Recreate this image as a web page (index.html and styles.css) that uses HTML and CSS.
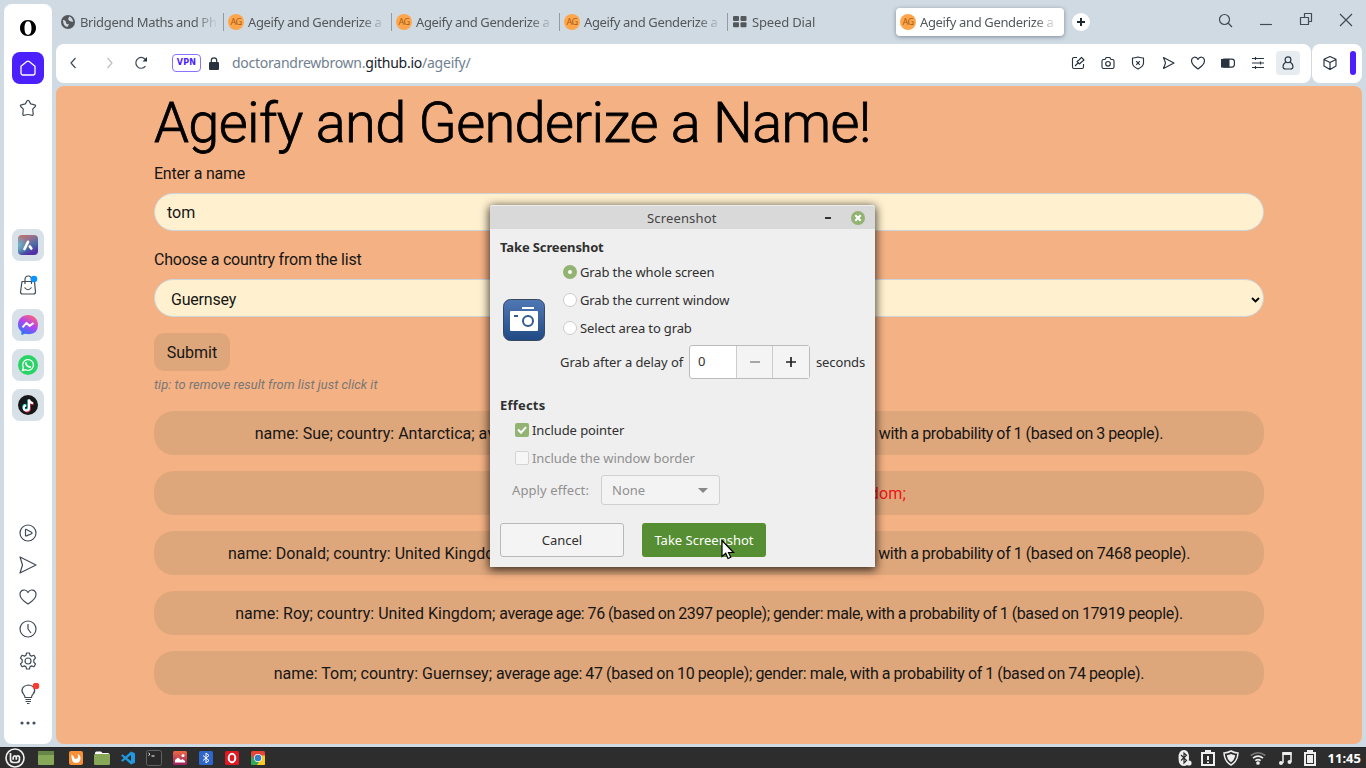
FILE: index.html
```html
<!DOCTYPE html>
<html lang="en">
<head>
<meta charset="utf-8">
<title>Ageify and Genderize a Name!</title>
<link rel="stylesheet" href="styles.css">
</head>
<body>
<div class="desktop">
  <div class="browser">
    <aside class="sidebar">
      <div class="side-top">
        <svg class="opera" width="16" height="18" viewBox="0 0 16 18"><path fill="#000" fill-rule="evenodd" d="M8 1C3.300 1 0 4.500 0 9s3.300 8 8 8 8-3.500 8-8-3.300-8-8-8zm0 1.200c2.300 0 3.500 2.800 3.500 6.800s-1.200 6.800-3.500 6.800S4.500 13 4.500 9 5.700 2.200 8 2.200z"/></svg>
        <div class="home"><svg class="line" width="18" height="18" viewBox="0 0 18 18"><path d="M2 7.300 7.800 2.600q1.200-.9 2.400 0L16 7.300V14q0 2-2 2H4q-2 0-2-2z"/></svg></div>
        <svg class="line star" width="18" height="18" viewBox="0 0 18 18"><path d="M8 1.900q1-1.300 2 0l1.700 3 4 .9q1.500.5.500 1.700L13.700 10.200l.5 4.900q-.2 1.500-1.700 1.100Q9 14.800 5.500 16.200q-1.500.4-1.700-1.100l.5-4.900L1.800 7.500q-1-1.200.5-1.700l4-.9z"/></svg>
      </div>
      <div class="side-apps">
        <div class="app"><svg width="20" height="20" viewBox="0 0 20 20"><defs><linearGradient id="aria" x1="0" y1="0" x2=".5" y2="1"><stop offset="0" stop-color="#c97065"/><stop offset=".35" stop-color="#98718c"/><stop offset=".7" stop-color="#486ca7"/><stop offset="1" stop-color="#5330a4"/></linearGradient><radialGradient id="glow" cx="0" cy=".5" r=".5"><stop offset="0" stop-color="#68bad2"/><stop offset="1" stop-color="#68bad2" stop-opacity="0"/></radialGradient></defs><rect width="20" height="20" rx="4" fill="url(#aria)"/><rect width="20" height="20" rx="4" fill="url(#glow)"/><path d="M6.500 14 10 6.800M11.800 11.500l1.500 2" stroke="#fff" stroke-width="2.700" stroke-linecap="round" fill="none"/></svg></div>
        <div class="bag"><svg class="line" width="20" height="22" viewBox="0 0 20 22"><path d="M4 7.500h12.500l1 10.500q0 2-2 2H4.500q-2 0-2-2zM7 10V6q0-4 3.200-4 3.300 0 3.300 4v4M6.500 13.500q3.500 4.500 7 0"/><circle cx="16" cy="5" r="3.300" fill="#0b93ff" stroke="none"/></svg></div>
        <div class="app"><svg width="20" height="20" viewBox="0 0 20 20"><defs><linearGradient id="msg" x1=".75" y1="0" x2=".2" y2="1"><stop offset="0" stop-color="#ff6474"/><stop offset=".45" stop-color="#b145ef"/><stop offset="1" stop-color="#167cff"/></linearGradient></defs><path fill="url(#msg)" d="M10 0C4.300 0 0 4 0 9.500q0 4.300 3.400 7V20L7 18.800Q20 21 20 9.500C20 4 15.700 0 10 0z"/><path d="m4.500 12.400 4-4.500 3 3 4-2.900" fill="none" stroke="#fff" stroke-width="2" stroke-linejoin="round"/></svg></div>
        <div class="app"><svg width="20" height="20" viewBox="0 0 20 20"><circle cx="10" cy="10" r="10" fill="#28d466"/><path d="m4.500 15.500.8-3A5.400 5.400 0 1 1 7.500 14.700z" fill="none" stroke="#fff" stroke-width="1.300"/><path d="M8 7.300q-.5 2.200 1.600 3.800t3.300.5" fill="none" stroke="#fff" stroke-width="1.800"/></svg></div>
        <div class="app"><svg width="20" height="20" viewBox="0 0 20 20"><circle cx="10" cy="10" r="10" fill="#161719"/><g fill="none" stroke-width="2"><path stroke="#2ce5df" d="M10.300 4.500v8a2.500 2.500 0 1 1-2.500-2.700M10.300 4.500q.5 3.300 4 3.800"/><path stroke="#f33858" d="M11.700 5.500v8A2.500 2.500 0 0 1 7 15M11.700 5.500q.5 3 4 3.300"/><path stroke="#fff" d="M11 4.500v8.500a2.600 2.600 0 1 1-2.600-2.600M11 4.500q.5 3.300 4 3.800"/></g></svg></div>
      </div>
      <div class="side-tools">
        <svg class="line" width="20" height="20" viewBox="0 0 20 20"><circle cx="10" cy="10" r="8"/><path d="M7.500 7q0-1 1-.5l5 2.700q1 .8 0 1.500l-5 2.200q-1 .4-1-.5z"/></svg>
        <svg class="line" width="20" height="20" viewBox="0 0 20 20"><path d="m2 2 16 8-16 8 2.500-8z"/></svg>
        <svg class="line" width="20" height="20" viewBox="0 0 20 20"><path d="M10 17Q2 12 2 7.500C2 2.500 8 1.500 10 5.500c2-4 8-3 8 2Q18 12 10 17z"/></svg>
        <svg class="line" width="20" height="20" viewBox="0 0 20 20"><circle cx="10" cy="10" r="8"/><path d="M10 5v5l3 4"/></svg>
        <svg class="line" width="20" height="20" viewBox="0 0 20 20"><circle cx="10" cy="10" r="3"/><path d="M8.500 2h3l.5 2.300 1.500.8L16 4.300 17.500 7l-1.700 1.800v2.400l1.700 1.800-1.500 2.700-2.500-.8-1.500.8-.5 2.300h-3L8 15.700l-1.500-.8-2.500.8L2.500 13l1.700-1.800V8.800L2.500 7 4 4.300l2.500.8L8 4.300z"/></svg>
        <svg class="line" width="24" height="22" viewBox="0 0 24 22"><path d="M9 14.500q0-2-1.500-3.300C4.500 8 6 2.500 12.500 2 19 2.500 20 8 17 11.200q-1.500 1.300-1.500 3.300zM9.500 16.500h5.500M9.500 18.500h5.500M11 20.500h2.500"/><circle cx="20" cy="3" r="3.300" fill="#fa3c31" stroke="none"/></svg>
        <svg width="20" height="8" viewBox="0 0 20 8" fill="#465061"><circle cx="4" cy="4" r="1.600"/><circle cx="10" cy="4" r="1.600"/><circle cx="16" cy="4" r="1.600"/></svg>
      </div>
    </aside>

    <main class="main">
      <header class="tabs">
        <div class="tab"><svg class="globe" width="14" height="14" viewBox="0 0 14 14"><circle cx="7" cy="7" r="7" fill="#54585b"/><path d="M2 5q3 0 3 2.500T8 9l-1.500 3Q2 11 2 5zM8.500 1.500 7 4l1.500 2 3.500 1q0-4-3.500-5.500z" fill="#d0d9e1"/></svg><span class="tab-title t0">Bridgend Maths and Phy</span></div>
        <div class="tab"><i class="ag">AG</i><span class="tab-title">Ageify and Genderize a N</span></div>
        <div class="tab"><i class="ag">AG</i><span class="tab-title">Ageify and Genderize a N</span></div>
        <div class="tab"><i class="ag">AG</i><span class="tab-title">Ageify and Genderize a N</span></div>
        <div class="tab last"><svg class="dial" width="14" height="12" viewBox="0 0 14 12" fill="#54585b"><rect width="6" height="5" rx="1"/><rect x="7.500" width="6" height="5" rx="1"/><rect y="6.300" width="6" height="5" rx="1"/><rect x="7.500" y="6.300" width="6" height="5" rx="1"/></svg><span class="tab-title t4">Speed Dial</span></div>
        <div class="tab active"><i class="ag">AG</i><span class="tab-title">Ageify and Genderize a N</span></div>
        <button class="plus"><svg width="18" height="18" viewBox="0 0 18 18"><path d="M5 9h8M9 5v8" stroke="#1b2733" stroke-width="2"/></svg></button>
        <div class="window-buttons">
          <svg class="line" width="16" height="16" viewBox="0 0 16 16"><circle cx="7.500" cy="7.500" r="5"/><path d="m11 11 4 4"/></svg>
          <svg class="line" width="14" height="16" viewBox="0 0 14 16"><path d="M1 12.500h12"/></svg>
          <svg class="line" width="14" height="16" viewBox="0 0 14 16"><path d="M1.500 5.500h8v7h-8zM5.500 5V1.500h7v8H10"/></svg>
          <svg class="line" width="14" height="16" viewBox="0 0 14 16"><path d="m1 2 12 12M13 2 1 14"/></svg>
        </div>
      </header>

      <nav class="toolbar">
        <div class="address">
          <svg class="line back" width="10" height="12" viewBox="0 0 10 12"><path d="M7.500 1 3 6l4.500 5"/></svg>
          <svg class="line fwd" width="10" height="12" viewBox="0 0 10 12"><path d="m2.500 1 4.500 5-4.500 5"/></svg>
          <svg class="line reload" width="14" height="14" viewBox="0 0 14 14"><path d="M11.500 10.200a5.400 5.400 0 1 1 .6-5.700"/><path d="M13 1v4.500H8.500z" fill="#28333f" stroke="none"/></svg>
          <span class="vpn">VPN</span>
          <svg class="lock" width="10" height="13" viewBox="0 0 10 13"><rect y="5" width="10" height="8" rx="1.300" fill="#28333f"/><path d="M2.300 6V3.500a2.700 2.700 0 0 1 5.400 0V6" fill="none" stroke="#28333f" stroke-width="1.200"/></svg>
          <span class="url">doctorandrewbrown.<b>github.io</b>/ageify/</span>
          <div class="tools">
            <svg class="line" width="14" height="14" viewBox="0 0 14 14"><path d="M6 1.500H3q-1.500 0-1.500 1.500v8q0 1.500 1.500 1.500h8q1.500 0 1.500-1.500V8M4 10l3-3M6 5.500 8.500 8 10 6.500 13 4 10.500 1.300 8 4z"/></svg>
            <svg class="line" width="14" height="14" viewBox="0 0 14 14"><path d="M2.500 3.500H4l1.200-2h3.600l1.200 2h1.500q1.500 0 1.500 1.500v6q0 1.500-1.500 1.500h-9Q1 12.500 1 11V5q0-1.500 1.500-1.500z"/><circle cx="7" cy="7.800" r="2.300"/></svg>
            <svg class="line" width="14" height="14" viewBox="0 0 14 14"><path d="M7 1q3 1 5.500 1v5Q12.500 10.500 7 13 1.500 10.500 1.500 7V2Q4 2 7 1zM5.200 5.200l3.600 3.600M8.800 5.200 5.200 8.800"/></svg>
            <svg class="line" width="14" height="14" viewBox="0 0 14 14"><path d="M2.500 1.500 13 7 2.500 12.500 4.500 7z"/></svg>
            <svg class="line" width="14" height="14" viewBox="1 0 14 14"><path d="M8 13Q1.500 8.500 1.500 4.800C1.500.5 6.500 0 8 3.500 9.500 0 14.500.5 14.500 4.800 14.500 8.500 8 13 8 13z"/></svg>
            <svg width="14" height="14" viewBox="0 0 14 14"><rect x=".6" y="3.100" width="12.800" height="8" rx="2.500" fill="none" stroke="#28333f" stroke-width="1.200"/><path d="M0 3h8.500v8.500H0z" fill="#28333f"/></svg>
            <svg class="line" width="14" height="14" viewBox="0 0 14 14"><path d="M1 2.500h12M1 7h12M1 11.500h12M4.500 1v3M9.500 5.500v3M4.500 10v3"/></svg>
            <div class="user"><svg class="line" width="12" height="14" viewBox="0 0 12 14"><circle cx="6" cy="3.800" r="2.900"/><path d="M3.800 6Q1 8 1 10.500 1 13 3.500 13h5Q11 13 11 10.500 11 8 8.200 6"/></svg></div>
          </div>
        </div>
        <div class="extensions">
          <svg class="line" width="14" height="16" viewBox="0 0 14 16"><path d="m7 1.500 6 2.800v6.600l-6 3.600-6-3.600V4.300zM1 4.500l6 3 6-3M7 7.500v7"/></svg>
          <i class="accent"></i>
        </div>
      </nav>

      <section class="page">
        <h1><span>Ageify and Genderize a Name!</span></h1>
        <label class="label-name">Enter a name</label>
        <div class="field">tom</div>
        <label class="label-country">Choose a country from the list</label>
        <div class="field select">Guernsey<svg width="9" height="8" viewBox="0 0 9 8"><path d="m1 2 3.500 3.500L8 2" fill="none" stroke="#000" stroke-width="1.800"/></svg></div>
        <button class="submit">Submit</button>
        <p class="tip">tip: to remove result from list just click it</p>
        <ul class="results">
          <li><span class="r1">name: Sue; country: Antarctica; <span class="wide">average age: 68 (based on 3 people); gender: female,</span> <span class="tail">with a probability of 1 (based on 3 people).</span></span></li>
          <li class="error"><span class="r2">no results found: name: Bob; country: United Kingdom;</span></li>
          <li><span class="r3">name: Donald; country: United Kingdom; <span class="tail">average age: 71 (based on 988 people); gender: male, with a probability of 1 (based on 7468 people).</span></span></li>
          <li><span class="r4">name: Roy; country: United Kingdom; <span class="tail">average age: 76 (based on 2397 people); gender: male, with a probability of 1 (based on 17919 people).</span></span></li>
          <li><span class="r5">name: Tom; country: Guernsey; <span class="tail">average age: 47 (based on 10 people); gender: male, with a probability of 1 (based on 74 people).</span></span></li>
        </ul>
      </section>
    </main>
  </div>

  <footer class="panel">
    <div class="launchers">
      <svg width="20" height="20" viewBox="0 0 20 20" fill="none" stroke="#f0f0f0"><circle cx="10" cy="10" r="9" stroke-width="1.600"/><path stroke-width="1.700" d="M5.500 5v6.500q0 3 3 3h3q3 0 3-3V9.500q0-1.700-1.600-1.700T11.300 9.500v2.300M11.300 11.800V9.500q0-1.700-1.500-1.700T8.200 9.500v2.300"/></svg>
      <svg width="16" height="14" viewBox="0 0 16 14"><rect width="16" height="14" rx="1" fill="#87a859"/><path d="M0 0h16v4H0z" fill="#668648"/></svg>
      <svg width="14" height="14" viewBox="0 0 14 14"><rect width="14" height="14" rx="2" fill="#f79039"/><path d="M2.500 3.500Q2 12 7 12q4.500 0 4.500-5 0-3-3-4 2 4-1.500 5Q5 8 4.500 5z" fill="#fff"/></svg>
      <svg width="16" height="14" viewBox="0 0 16 14"><path d="M1 2q0-1.500 1.500-1.500H7L8.500 2H14q1.500 0 1.500 1.500v4H1z" fill="#fff"/><rect y="3" width="16" height="11" rx="1.300" fill="#87a859"/></svg>
      <svg width="14" height="14" viewBox="0 0 14 14"><path d="M0 4.500 1.500 3.300 10 10V4L1.500 10.700 0 9.500 10 .5l4 1.700v9.600l-4 1.700z" fill="#2198df"/></svg>
      <svg width="16" height="16" viewBox="0 0 16 16"><rect x=".5" y=".5" width="15" height="15" rx="2" fill="#292929" stroke="#626262"/><path d="M2.500 3 4 4.300 2.500 5.600M5.500 6h3" stroke="#fff" fill="none"/></svg>
      <svg width="14" height="14" viewBox="0 0 14 14"><defs><linearGradient id="pic" x2="0" y2="1"><stop stop-color="#ef6a45"/><stop offset="1" stop-color="#9d215e"/></linearGradient></defs><rect width="14" height="14" rx="1.500" fill="url(#pic)"/><path d="M2 11.500V9l3-2.500L8 9l1.500-1 2.500 2v1.500z" fill="#fff"/><circle cx="10" cy="4.500" r="1.500" fill="#fff"/></svg>
      <svg width="14" height="14" viewBox="0 0 14 14"><rect width="14" height="14" rx="1.500" fill="#2e66cc"/><path d="m4 4.500 6 5-3 2.500V2l3 2.500-6 5" fill="none" stroke="#fff"/></svg>
      <svg width="14" height="14" viewBox="0 0 14 14"><rect width="14" height="14" rx="1.500" fill="#df1922"/><ellipse cx="7" cy="7" rx="3.300" ry="4.200" fill="none" stroke="#fff" stroke-width="2"/></svg>
      <svg width="14" height="14" viewBox="0 0 14 14"><rect width="14" height="14" rx="1.500" fill="#e44535"/><path d="M0 4v9q0 1 1 1h6l2-5-6-1z" fill="#35a853"/><path d="M14 4.500V13q0 1-1 1H6l3-5V4.500z" fill="#fbc924"/><circle cx="7" cy="7" r="4" fill="#fff"/><circle cx="7" cy="7" r="3.300" fill="#377fc5"/></svg>
    </div>
    <div class="tray">
      <svg width="14" height="16" viewBox="0 0 14 16"><path d="M6 0q5 0 5 8t-5 8q-5.500 0-5.500-8T6 0z" fill="#eee"/><path d="m3 5 5.500 5.500L6 13V3l2.500 2.300L3 10.500" fill="none" stroke="#2d2d2d" stroke-width="1.200"/><circle cx="11" cy="13" r="2.600" fill="#eee"/></svg>
      <svg width="14" height="16" viewBox="0 0 14 16" fill="none" stroke="#eee" stroke-width="2"><path d="M1 3h12v12H1zM5 3V1h4v2M7 6v4M7 11.500v1.500"/></svg>
      <svg width="16" height="16" viewBox="0 0 16 16"><path d="M8 1q3 1.800 7 2Q14.500 11.500 8 15 1.500 11.500 1 3q4-.2 7-2z" fill="none" stroke="#eee" stroke-width="1.500"/><path d="M8 4q2 1 4.200 1.200Q11.500 10 8 12.300 4.500 10 3.800 5.200 6 5 8 4z" fill="#eee"/></svg>
      <svg width="16" height="14" viewBox="0 0 16 14" fill="none" stroke="#eee" stroke-width="1.700"><path stroke="#777" d="M.7 4.500q7.300-5.500 14.600 0"/><path d="M3 7.200q5-4 10 0M5.300 9.700q2.700-2.200 5.400 0"/><circle cx="8" cy="12" r="1" fill="#eee"/></svg>
      <svg width="14" height="14" viewBox="0 0 14 14"><path d="M5 12V2h8v9" fill="none" stroke="#eee" stroke-width="1.500"/><path d="M4.500 1h9v3h-9z" fill="#eee"/><circle cx="3" cy="12" r="2" fill="#eee"/><circle cx="11.500" cy="11" r="2" fill="#eee"/></svg>
      <svg width="12" height="16" viewBox="0 0 12 16"><path d="M1 3h10v12H1zM4 3V1h4v2" fill="none" stroke="#eee" stroke-width="2"/><path d="M3 5h6v8H3z" fill="#eee"/></svg>
      <span class="clock">11:45</span>
    </div>
  </footer>

  <div class="dialog">
    <div class="titlebar"><span class="title">Screenshot</span><i class="minimise"></i><svg class="close" width="14" height="14" viewBox="0 0 14 14"><circle cx="7" cy="7" r="7" fill="#92b372"/><path d="m4.300 4.300 5.400 5.400M9.700 4.300 4.300 9.700" stroke="#fff" stroke-width="2"/></svg></div>
    <div class="dialog-body">
      <h2 class="h-take">Take Screenshot</h2>
      <div class="grab">
        <svg class="camera" width="42" height="42" viewBox="0 0 42 42"><defs><linearGradient id="cam" x2="0" y2="1"><stop stop-color="#5078b5"/><stop offset="1" stop-color="#214983"/></linearGradient></defs><rect x=".5" y=".5" width="41" height="41" rx="7" fill="url(#cam)" stroke="#36495f"/><path d="M19 8h12v2H19zM8 12h26q1 0 1 1v18q0 1-1 1H8q-1 0-1-1V13q0-1 1-1z" fill="#fff"/><path d="M11 16h4v2h-4z" fill="#315a95"/><circle cx="25" cy="22" r="5" fill="none" stroke="#315a95" stroke-width="2"/></svg>
        <div class="options">
          <div class="option"><i class="radio on"></i><span class="o1">Grab the whole screen</span></div>
          <div class="option"><i class="radio"></i><span class="o2">Grab the current window</span></div>
          <div class="option"><i class="radio"></i><span class="o3">Select area to grab</span></div>
          <div class="delay"><span class="d1">Grab after a delay of</span><div class="spin"><span>0</span><i><svg width="12" height="12" viewBox="0 0 12 12"><path d="M1 6h10" stroke="#999" stroke-width="1.700"/></svg></i><i class="inc"><svg width="12" height="12" viewBox="0 0 12 12"><path d="M1 6h10M6 1v10" stroke="#222" stroke-width="1.700"/></svg></i></div><span class="d2">seconds</span></div>
        </div>
      </div>
      <h2 class="h-effects">Effects</h2>
      <div class="check"><i class="box on"><svg width="14" height="14" viewBox="0 0 14 14"><path d="m3 6.500 3 3.200 5-5.500" fill="none" stroke="#fff" stroke-width="2"/></svg></i><span class="c1">Include pointer</span></div>
      <div class="check dim"><i class="box"></i><span class="c2">Include the window border</span></div>
      <div class="effect"><span class="e1">Apply effect:</span><div class="combo">None<i></i></div></div>
      <div class="actions"><button class="cancel">Cancel</button><button class="take">Take Screenshot</button></div>
    </div>
  </div>
  <svg class="pointer" width="14" height="22" viewBox="0 0 14 22"><path d="M1 1.500v16l3.700-3.200L7 19.500l2.800-1.200L7.500 13.500h5z" fill="#fff" stroke="#000" stroke-width="1.200"/></svg>
</div>
</body>
</html>
```
FILE: styles.css
```css
* { box-sizing: border-box; }
body { margin: 0; font-family: "Noto Sans", sans-serif; overflow: hidden; }
svg { display: block; flex: none; }
button { border: 0; padding: 0; font: inherit; }
.line { fill: none; stroke: #414b57; stroke-width: 1.2; stroke-linejoin: round; }
.desktop { position: relative; width: 1366px; height: 768px; background: #d0dae2; display: flex; flex-direction: column; }
.browser { height: 747px; display: flex; gap: 4px; padding: 4px 4px 3px; }

.sidebar { width: 48px; background: #fff; border-radius: 8px; display: flex; flex-direction: column; align-items: center; }
.side-top { display: flex; flex-direction: column; align-items: center; padding-top: 15px; height: 225px; flex: none; }
.home { width: 32px; height: 32px; border-radius: 8px; background: #4c1fff; margin: 15px 0 14px; display: grid; place-items: center; }
.home .line { stroke: #fff; stroke-width: 1.3; }
.star { margin-top: 1px; }
.side-apps { display: flex; flex-direction: column; gap: 8px; height: 294px; flex: none; }
.app { width: 32px; height: 32px; border-radius: 8px; background: #d7e1e7; display: grid; place-items: center; }
.bag { width: 32px; height: 32px; display: grid; place-items: center; }
.side-tools { display: flex; flex-direction: column; align-items: center; gap: 12px; margin-left: -1px; }
.side-tools svg:last-child { margin-top: 2px; }

.main { width: 1306px; display: flex; flex-direction: column; }
.tabs { height: 40px; display: flex; align-items: flex-start; padding-top: 4px; color: #54585b; }
.tab { width: 168px; height: 28px; display: flex; align-items: center; padding-left: 4px; position: relative; gap: 4px; }
.tab::after { content: ""; position: absolute; right: 0; top: 5px; width: 1px; height: 18px; background: #929ba2; }
.tab.last::after, .active::after { display: none; }
.globe { margin: 0 1px; }
.dial { margin: 0 1px; }
.tab-title { font-size: 13px; width: 137px; overflow: hidden; white-space: nowrap; letter-spacing: -.35px; -webkit-mask-image: linear-gradient(90deg, #000 115px, transparent 138px); mask-image: linear-gradient(90deg, #000 115px, transparent 138px); }
.t4 { letter-spacing: -.15px; }
.ag { width: 16px; height: 16px; border-radius: 50%; background: #ffa54b; color: #a55d12; font: 9px/16px "Noto Sans", sans-serif; letter-spacing: -.5px; text-align: center; flex: none; }
.active { background: #fff; border-radius: 4px; box-shadow: 0 1px 4px rgba(40,60,80,.5); }
.plus { width: 18px; height: 18px; border-radius: 50%; background: #fff; margin: 5px 0 0 8px; }
.window-buttons { display: flex; gap: 26px; margin: 4px 9px 0 auto; }

.toolbar { height: 39px; display: flex; gap: 1px; }
.address { width: 1255px; background: #fff; border-radius: 8px; display: flex; align-items: center; padding: 0 11px 1px 12px; }
.fwd { margin-left: 27px; opacity: .35; }
.reload { margin-left: 19px; }
.vpn { width: 29px; height: 18px; border: 1.5px solid #8d72ff; border-radius: 4px; color: #4c1fff; font: bold 8px/16px "DejaVu Sans", sans-serif; text-align: center; margin-left: 24px; letter-spacing: .2px; flex: none; }
.lock { margin-left: 8px; }
.url { font-size: 14px; color: #718191; margin-left: 13px; padding-bottom: 2px; letter-spacing: -.25px; white-space: nowrap; }
.url b { font-weight: 400; color: #15202b; }
.tools { margin-left: auto; display: flex; align-items: center; gap: 16px; }
.tools svg, .extensions svg { stroke-width: 1.15; }
.tools .line, .extensions .line { stroke: #28333f; }
.user { width: 24px; height: 24px; border-radius: 4px; background: #e7ecf1; display: grid; place-items: center; margin-left: -5px; }
.extensions { width: 50px; background: #fff; border-radius: 8px; display: flex; align-items: center; padding: 0 0 1px 11px; gap: 13px; }
.accent { width: 6px; height: 24px; border-radius: 3px; background: #4c1fff; }

.page { height: 658px; margin-top: 3px; background: #f4b183; border-radius: 8px; padding: 0 98px; font-family: Roboto, sans-serif; font-size: 16px; line-height: 24px; color: #161616; display: flex; flex-direction: column; align-items: stretch; }
.page h1 { margin: 4px 0 5px; font-size: 56px; line-height: 67px; font-weight: 300; color: #000; white-space: nowrap; letter-spacing: -.68px; -webkit-text-stroke: .8px #000; }
.label-name, .label-country { height: 24px; margin-bottom: 7px; letter-spacing: -.22px; }
.field { height: 38px; border: 1px solid #ced4da; border-radius: 20px; background: #fff1cf; padding: 7px 12px 5px; margin-bottom: 17px; flex: none; }
.select { display: flex; align-items: center; justify-content: space-between; padding: 3px 3px 0 16px; margin-bottom: 16px; letter-spacing: -.2px; }
.submit { width: 76px; height: 38px; border-radius: 10px; background: #dea67b; color: #161616; padding-top: 2px; flex: none; }
.tip { margin: 4px 0 16px; height: 20px; font-size: 12.800px; line-height: 20px; font-style: italic; color: #777; letter-spacing: .06px; }
.results { list-style: none; margin: 0; padding: 0; display: flex; flex-direction: column; gap: 16px; }
.results li { height: 44px; border-radius: 20px; background: #dea67b; line-height: 46px; text-align: center; white-space: nowrap; }
.results .error { color: #f01414; }
.tail { word-spacing: -.4px; letter-spacing: -.3px; }
.r4 .tail { letter-spacing: -.38px; }
.r1 .tail { letter-spacing: -.33px; }
.wide { letter-spacing: .43px; }
.r2 { letter-spacing: .17px; }

.panel { height: 21px; background: #2d2d2d; border-top: 1px solid #222; display: flex; justify-content: space-between; align-items: center; padding: 0 5px 1px; }
.launchers { display: grid; grid-template-columns: 24px 34px repeat(8, 26px); align-items: center; justify-items: center; }
.launchers svg:first-child { justify-self: start; }
.tray { display: flex; align-items: center; gap: 12px; }
.tray svg:nth-child(1) { margin-right: -3px; }
.tray svg:nth-child(2) { margin-right: -4px; }
.tray svg:nth-child(3) { margin-right: -1px; }
.clock { color: #fff; font: bold 13px "Noto Sans", sans-serif; }

.dialog { position: absolute; left: 490px; top: 205px; width: 385px; height: 362px; background: #efefef; border-radius: 3px 3px 0 0; box-shadow: 0 2px 10px 1px rgba(0,0,0,.75); color: #303030; font-size: 13px; letter-spacing: -.13px; white-space: nowrap; }
.titlebar { height: 24px; background: #d9d9d9; border-top: 1px solid #eee; border-radius: 3px 3px 0 0; display: flex; align-items: center; padding-right: 10px; color: #444; }
.title { margin-left: 157px; letter-spacing: .15px; }
.minimise { width: 6px; height: 2px; background: #333; margin: 0 20px 0 auto; }
.dialog-body { padding: 9px 10px 10px; }
.dialog h2 { margin: 0; font-size: 13px; line-height: 18px; }
.h-effects { letter-spacing: .2px; }
.grab { display: flex; padding-top: 2px; height: 140px; }
.camera { margin: 41px 0 0 3px; }
.options { padding-left: 15px; }
.option { height: 28px; display: flex; align-items: center; gap: 3px; padding-left: 3px; }
.radio { width: 14px; height: 14px; border-radius: 50%; background: #fff; border: 1px solid #ccc; }
.radio.on { background: #fff; border: 5px solid #92b372; }
.delay { display: flex; align-items: center; height: 40px; }
.d1 { width: 124px; letter-spacing: -.08px; }
.spin { width: 121px; height: 34px; margin: 0 6px 0 5px; border: 1px solid #bbb; border-radius: 3px; display: flex; background: #fff; }
.spin span { width: 46px; padding: 6px 0 0 8px; line-height: 19px; flex: none; }
.spin i { flex: 1; background: #f4f4f4; border-left: 1px solid #ccc; display: grid; place-items: center; }
.spin .inc { flex: 0 0 37px; }
.check { height: 28px; display: flex; align-items: center; gap: 3px; padding: 4px 0 0 15px; }
.check.dim { color: #909090; }
.c1, .c2 { letter-spacing: -.08px; }
.box { width: 14px; height: 14px; border-radius: 2px; background: #f6f6f6; border: 1px solid #d4d4d4; }
.box.on { border: 0; background: #92b372; }
.effect { height: 30px; margin-top: 5px; display: flex; align-items: center; padding-left: 12px; color: #909090; }
.e1 { width: 89px; letter-spacing: .1px; }
.combo { width: 119px; height: 30px; border: 1px solid #d0d0d0; border-radius: 3px; background: #f3f3f3; display: flex; align-items: center; justify-content: space-between; padding: 0 11px 0 10px; letter-spacing: 0; }
.combo i { border: 5px solid transparent; border-top-color: #888; border-bottom: 0; }
.actions { display: flex; gap: 18px; margin-top: 18px; }
.actions button { width: 124px; height: 34px; border-radius: 3px; }
.cancel { background: #f4f4f4; border: 1px solid #b8b8b8; color: #303030; }
.take { background: #568e33; color: #fff; }
.pointer { position: absolute; left: 721px; top: 539px; }
```
